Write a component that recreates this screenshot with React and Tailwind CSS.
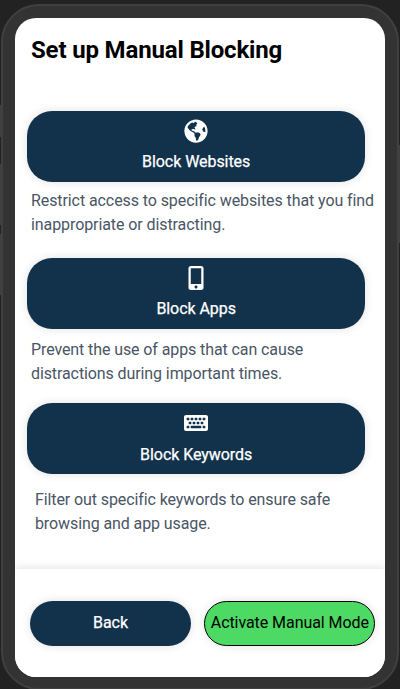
import { FaGlobeAmericas, FaMobileAlt, FaKeyboard } from "react-icons/fa";

const shadow = "shadow-[0_0_10px_rgba(0,0,0,0.12)]";

function BlockButton({ icon: Icon, label, labelClass = "mt-[7px]" }) {
  return (
    <button
      className={`flex h-[71px] w-[338.5px] flex-col items-center rounded-[25px] bg-[#12314b] pt-2 text-white ${shadow}`}
    >
      <Icon size={24} />
      <span
        className={`${labelClass} pl-[0.6px] text-base leading-6 font-normal tracking-[-0.06px] [-webkit-text-stroke:0.25px_white]`}
      >
        {label}
      </span>
    </button>
  );
}

export default function App() {
  return (
    <div className="relative h-[689px] w-[400px] overflow-hidden bg-[#222] font-['Roboto','Liberation_Sans',sans-serif]">
      <div className="absolute top-[105px] left-0 h-[32px] w-1 bg-[#404040]" />
      <div className="absolute top-[164px] left-0 h-[61px] w-1 bg-[#404040]" />
      <div className="absolute top-[234px] left-0 h-[61px] w-1 bg-[#404040]" />
      <div className="absolute top-[145px] right-0 h-[98px] w-1 bg-[#404040]" />

      <div className="relative ml-px h-[686px] w-[398px] translate-y-1 rounded-[38px] border-2 border-[#404040] bg-[#333] px-3 pt-3">
        <main className="flex h-[659px] w-[370px] flex-col overflow-hidden rounded-[21px] bg-white">
          <section className="h-[551px] shrink-0 pt-4 pl-[11.6px]">
            <h1 className="ml-[4.4px] text-2xl leading-8 font-bold tracking-[-0.16px] text-black">
              Set up Manual Blocking
            </h1>
            <div className="mt-[45px]">
              <BlockButton icon={FaGlobeAmericas} label="Block Websites" />
              <p className="mt-[7px] ml-[4.4px] text-base leading-6 tracking-[-0.085px] whitespace-nowrap text-gray-600">
                Restrict access to specific websites that you find
                <br />
                inappropriate or distracting.
              </p>
            </div>
            <div className="mt-[21px]">
              <BlockButton icon={FaMobileAlt} label="Block Apps" />
              <p className="mt-[9px] ml-[4.4px] text-base leading-6 tracking-[-0.1px] whitespace-nowrap text-gray-600">
                Prevent the use of apps that can cause
                <br />
                distractions during important times.
              </p>
            </div>
            <div className="mt-[17px]">
              <BlockButton icon={FaKeyboard} label="Block Keywords" labelClass="mt-2" />
              <p className="mt-[14px] ml-[8.4px] text-base leading-6 tracking-[-0.1px] whitespace-nowrap text-gray-600">
                Filter out specific keywords to ensure safe
                <br />
                browsing and app usage.
              </p>
            </div>
          </section>
          <footer className="flex flex-1 items-start gap-[13px] bg-white pt-8 pl-[15px] shadow-[0_0_10px_rgba(0,0,0,0.14)]">
            <button
              className={`h-[45px] w-[161px] rounded-[23px] bg-[#12314b] pb-[1px] text-base text-white [-webkit-text-stroke:0.25px_white] ${shadow}`}
            >
              Back
            </button>
            <button
              className={`h-[45px] w-[171px] rounded-[23px] border border-black bg-[#4cd964] pb-[1px] pl-[0.6px] text-base tracking-[-0.07px] whitespace-nowrap text-black ${shadow}`}
            >
              Activate Manual Mode
            </button>
          </footer>
        </main>
      </div>
    </div>
  );
}
